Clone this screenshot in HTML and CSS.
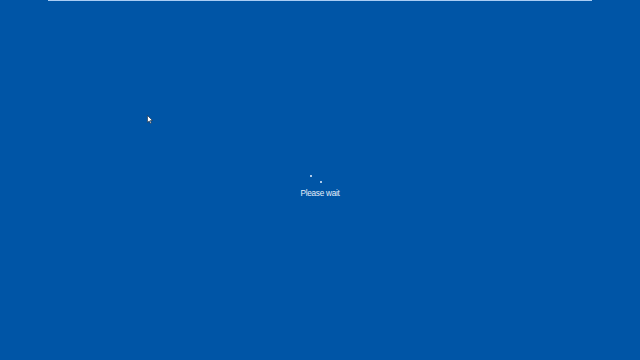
FILE: index.html
```html
<!DOCTYPE html>
<html>
<head>
<meta charset="utf-8">
<link rel="stylesheet" href="styles.css">
</head>
<body>
<div class="screen">
  <div class="topbar"></div>
  <main class="center">
    <div class="spinner">
      <span class="dot dot1"></span>
      <span class="dot dot2"></span>
    </div>
    <div class="label">Please wait</div>
  </main>
  <svg class="cursor" width="6" height="9" viewBox="0 0 6 9">
    <path d="M0.5 0.5 L0.5 7.5 L2.2 6 L3.4 8.5 L4.4 8 L3.3 5.6 L5.5 5.5 Z" fill="#ffffff" stroke="#1a2a40" stroke-width="0.6"/>
  </svg>
</div>
</body>
</html>
```

FILE: styles.css
```css
html, body {
  margin: 0;
  padding: 0;
}
body {
  background: #0055a6;
  width: 640px;
  height: 360px;
  overflow: hidden;
}
.screen {
  position: relative;
  width: 640px;
  height: 360px;
  display: flex;
  flex-direction: column;
}
.topbar {
  height: 1px;
  margin: 0 48px;
  background: #a9cdf5;
}
.center {
  display: flex;
  flex-direction: column;
  align-items: center;
  padding-top: 173px;
}
.spinner {
  position: relative;
  width: 20px;
  height: 12px;
}
.dot {
  position: absolute;
  width: 2px;
  height: 2px;
  border-radius: 1px;
  background: #e8f2ff;
}
.dot1 { left: 0px; top: 1px; }
.dot2 { left: 10px; top: 7px; }
.label {
  font-family: "Liberation Sans", Arial, sans-serif;
  font-size: 8.2px;
  letter-spacing: -0.25px;
  line-height: 10px;
  color: #e6f0fb;
  margin-top: 3px;
}
.cursor {
  position: absolute;
  left: 147px;
  top: 115px;
}
```
